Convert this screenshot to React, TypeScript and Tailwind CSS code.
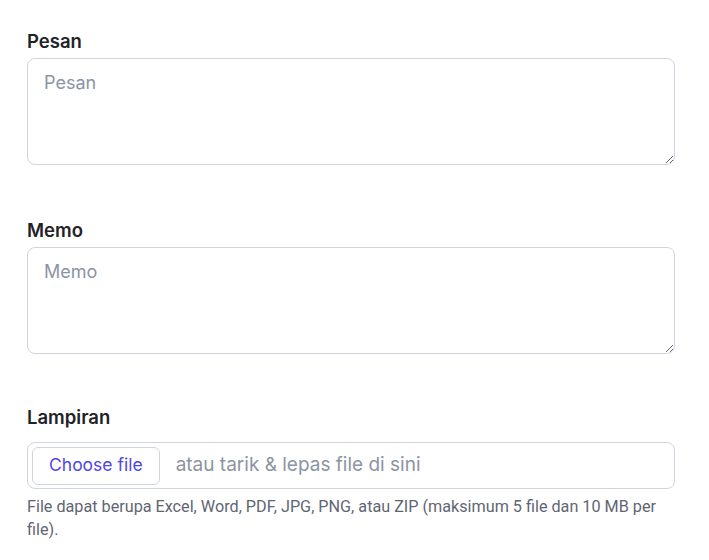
import React from 'react';

const fieldLabel = "block text-[18.5px] leading-6 font-semibold text-[#1f2328]";

const TextField = ({ label, id }: { label: string; id: string }) => {
  return (
    <div>
      <label htmlFor={id} className={`${fieldLabel} mb-[5px]`}>
        {label}
      </label>
      <textarea
        id={id}
        placeholder={label}
        className="block w-full h-[107px] rounded-lg border border-[#d0d5dd] bg-white px-4 py-3 text-[18px] leading-6 text-gray-900 placeholder:text-[#8b94a3] outline-none"
      />
    </div>
  );
};

const App = () => {
  return (
    <div className="bg-white min-h-screen pt-[29px] pl-[27px] pr-[34px]" style={{ fontFamily: 'Inter, "Noto Sans", sans-serif' }}>
      <div className="flex flex-col">
        <TextField label="Pesan" id="pesan" />
        <div className="mt-[53px]">
          <TextField label="Memo" id="memo" />
        </div>

        <div className="mt-[51px]">
          <span className={`${fieldLabel} mb-[13px]`}>Lampiran</span>
          <label className="flex items-center h-[47px] rounded-lg border border-[#d0d5dd] bg-white pl-[4px] cursor-pointer">
            <input type="file" multiple className="hidden" />
            <span className="flex items-center h-[38px] px-4 rounded-md border border-[#d0d5dd] text-[17.5px] text-[#4f46e5]">
              Choose file
            </span>
            <span className="ml-4 text-[19px] text-[#8b94a3]">atau tarik &amp; lepas file di sini</span>
          </label>
          <p className="mt-[6px] text-[16.2px] leading-[23px] text-[#5f6673]" style={{ fontFamily: 'Roboto, "Liberation Sans", sans-serif' }}>
            File dapat berupa Excel, Word, PDF, JPG, PNG, atau ZIP (maksimum 5 file dan 10 MB per file).
          </p>
        </div>
      </div>
    </div>
  );
};

export default App;
